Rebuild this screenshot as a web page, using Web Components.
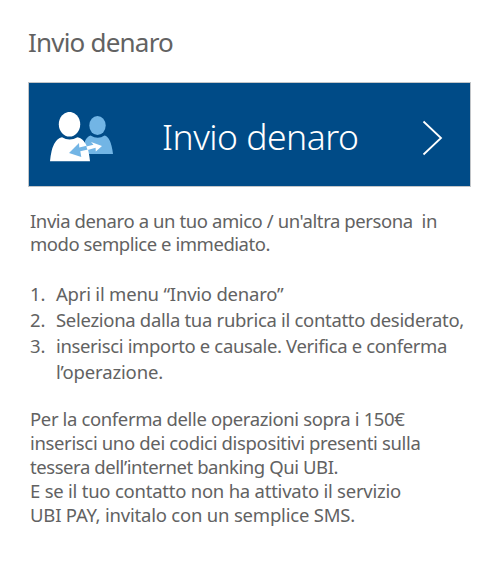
<!DOCTYPE html>
<html lang="it">
<head>
<meta charset="utf-8">
<title>Invio denaro</title>
<style>
body{margin:0;background:#fff;color:#626262;font-family:"Noto Sans","Open Sans",sans-serif}
</style>
</head>
<body>
<money-guide></money-guide>
<script>
/* One line of text, tracked so that it spans the width given in pixels. */
class TextLine extends HTMLElement{
  connectedCallback(){
    if(this.shadowRoot)return;
    const r=this.attachShadow({mode:'open'});
    r.innerHTML='<style>:host{display:block;white-space:pre}span{display:inline-block}</style><span><slot></slot></span>';
    const s=r.querySelector('span');
    const target=parseFloat(this.getAttribute('span'));
    const n=this.textContent.length;
    const w=s.getBoundingClientRect().width;
    if(n&&w)s.style.letterSpacing=((target-w)/n)+'px';
  }
}
class PeopleIcon extends HTMLElement{
  constructor(){super();this.attachShadow({mode:'open'}).innerHTML=`
<style>:host{display:block;width:64px;height:50px}svg{display:block}</style>
<svg width="64" height="50" viewBox="0 0 64 50">
<path fill="#72b5e5" d="M35 42V29Q37 24.500 40.500 23.500Q48 28 54.500 23.500Q61 25 63 42Z"/>
<ellipse cx="47.500" cy="13.500" rx="9" ry="10.800" fill="#004b87"/>
<ellipse cx="47.500" cy="13.500" rx="8.200" ry="9.500" fill="#72b5e5"/>
<path fill="#fff" d="M0 49.300Q2 27 12 25.200Q19.500 30 27.500 25.200Q38 27 40 49.300Z"/>
<ellipse cx="19.500" cy="12.200" rx="11.500" ry="13.500" fill="#004b87"/>
<ellipse cx="19.500" cy="12.200" rx="10.700" ry="12.300" fill="#fff"/>
<path fill="#72b5e5" d="M19 41L29 31L29.300 35.500L36.600 33.700L38 37.600L30.300 39.300L31.300 45Z"/>
<path fill="#fff" d="M36.300 34.400L43.500 32.800L41 29.900L52 34L45.800 39.400L45.600 35.700L37.700 38Z"/>
</svg>`}
}
class ActionBanner extends HTMLElement{
  constructor(){super();this.attachShadow({mode:'open'}).innerHTML=`
<style>
:host{display:flex;align-items:center;box-sizing:border-box;width:443px;height:105px;border:1px solid #c2c5c8;background:#004b87;color:#fff;padding:0 27px 0 21px}
people-icon{margin-top:4px}
.label{flex:1;margin-left:48px;font-size:35.500px;font-weight:300;line-height:50px;padding-top:3px}
svg{display:block;margin-top:7px}
</style>
<people-icon></people-icon><div class="label"><slot></slot></div>
<svg width="21" height="36" viewBox="0 0 21 36"><path d="M1.500 1.500L19 18L1.500 34.500" fill="none" stroke="#fff" stroke-width="1.800"/></svg>`}
}
class NumberedStep extends HTMLElement{
  constructor(){super();this.attachShadow({mode:'open'}).innerHTML=`
<style>:host{display:flex}.n{width:26px}</style><span class="n"></span><div><slot></slot></div>`}
  connectedCallback(){this.shadowRoot.querySelector('.n').textContent=this.getAttribute('number')+'.'}
}
class MoneyGuide extends HTMLElement{
  constructor(){super();this.attachShadow({mode:'open'}).innerHTML=`
<style>
:host{display:block;box-sizing:border-box;height:565px;padding:24px 0 0 28px;font-size:18.500px}
h1{margin:0;font-size:26px;font-weight:400;line-height:36px;height:58px}
section{margin-left:2px}
.intro{margin-top:22px;line-height:23px}
.steps{margin-top:26px;line-height:26px}
.note{margin-top:22px;line-height:24px}
</style>
<h1><text-line span="145">Invio denaro</text-line></h1>
<action-banner><text-line span="196.500">Invio denaro</text-line></action-banner>
<section class="intro">
<text-line span="407">Invia denaro a un tuo amico / un'altra persona  in</text-line>
<text-line span="240">modo semplice e immediato.</text-line>
</section>
<section class="steps">
<numbered-step number="1"><text-line span="227.500">Apri il menu “Invio denaro”</text-line></numbered-step>
<numbered-step number="2"><text-line span="408">Seleziona dalla tua rubrica il contatto desiderato,</text-line></numbered-step>
<numbered-step number="3"><text-line span="391">inserisci importo e causale. Verifica e conferma</text-line><text-line span="107">l’operazione.</text-line></numbered-step>
</section>
<section class="note">
<text-line span="374.500">Per la conferma delle operazioni sopra i 150€</text-line>
<text-line span="390.500">inserisci uno dei codici dispositivi presenti sulla</text-line>
<text-line span="308">tessera dell’internet banking Qui UBI.</text-line>
<text-line span="371">E se il tuo contatto non ha attivato il servizio</text-line>
<text-line span="325">UBI PAY, invitalo con un semplice SMS.</text-line>
</section>`}
}
customElements.define('people-icon',PeopleIcon);
customElements.define('action-banner',ActionBanner);
customElements.define('numbered-step',NumberedStep);
customElements.define('money-guide',MoneyGuide);
customElements.define('text-line',TextLine);
</script>
</body>
</html>
